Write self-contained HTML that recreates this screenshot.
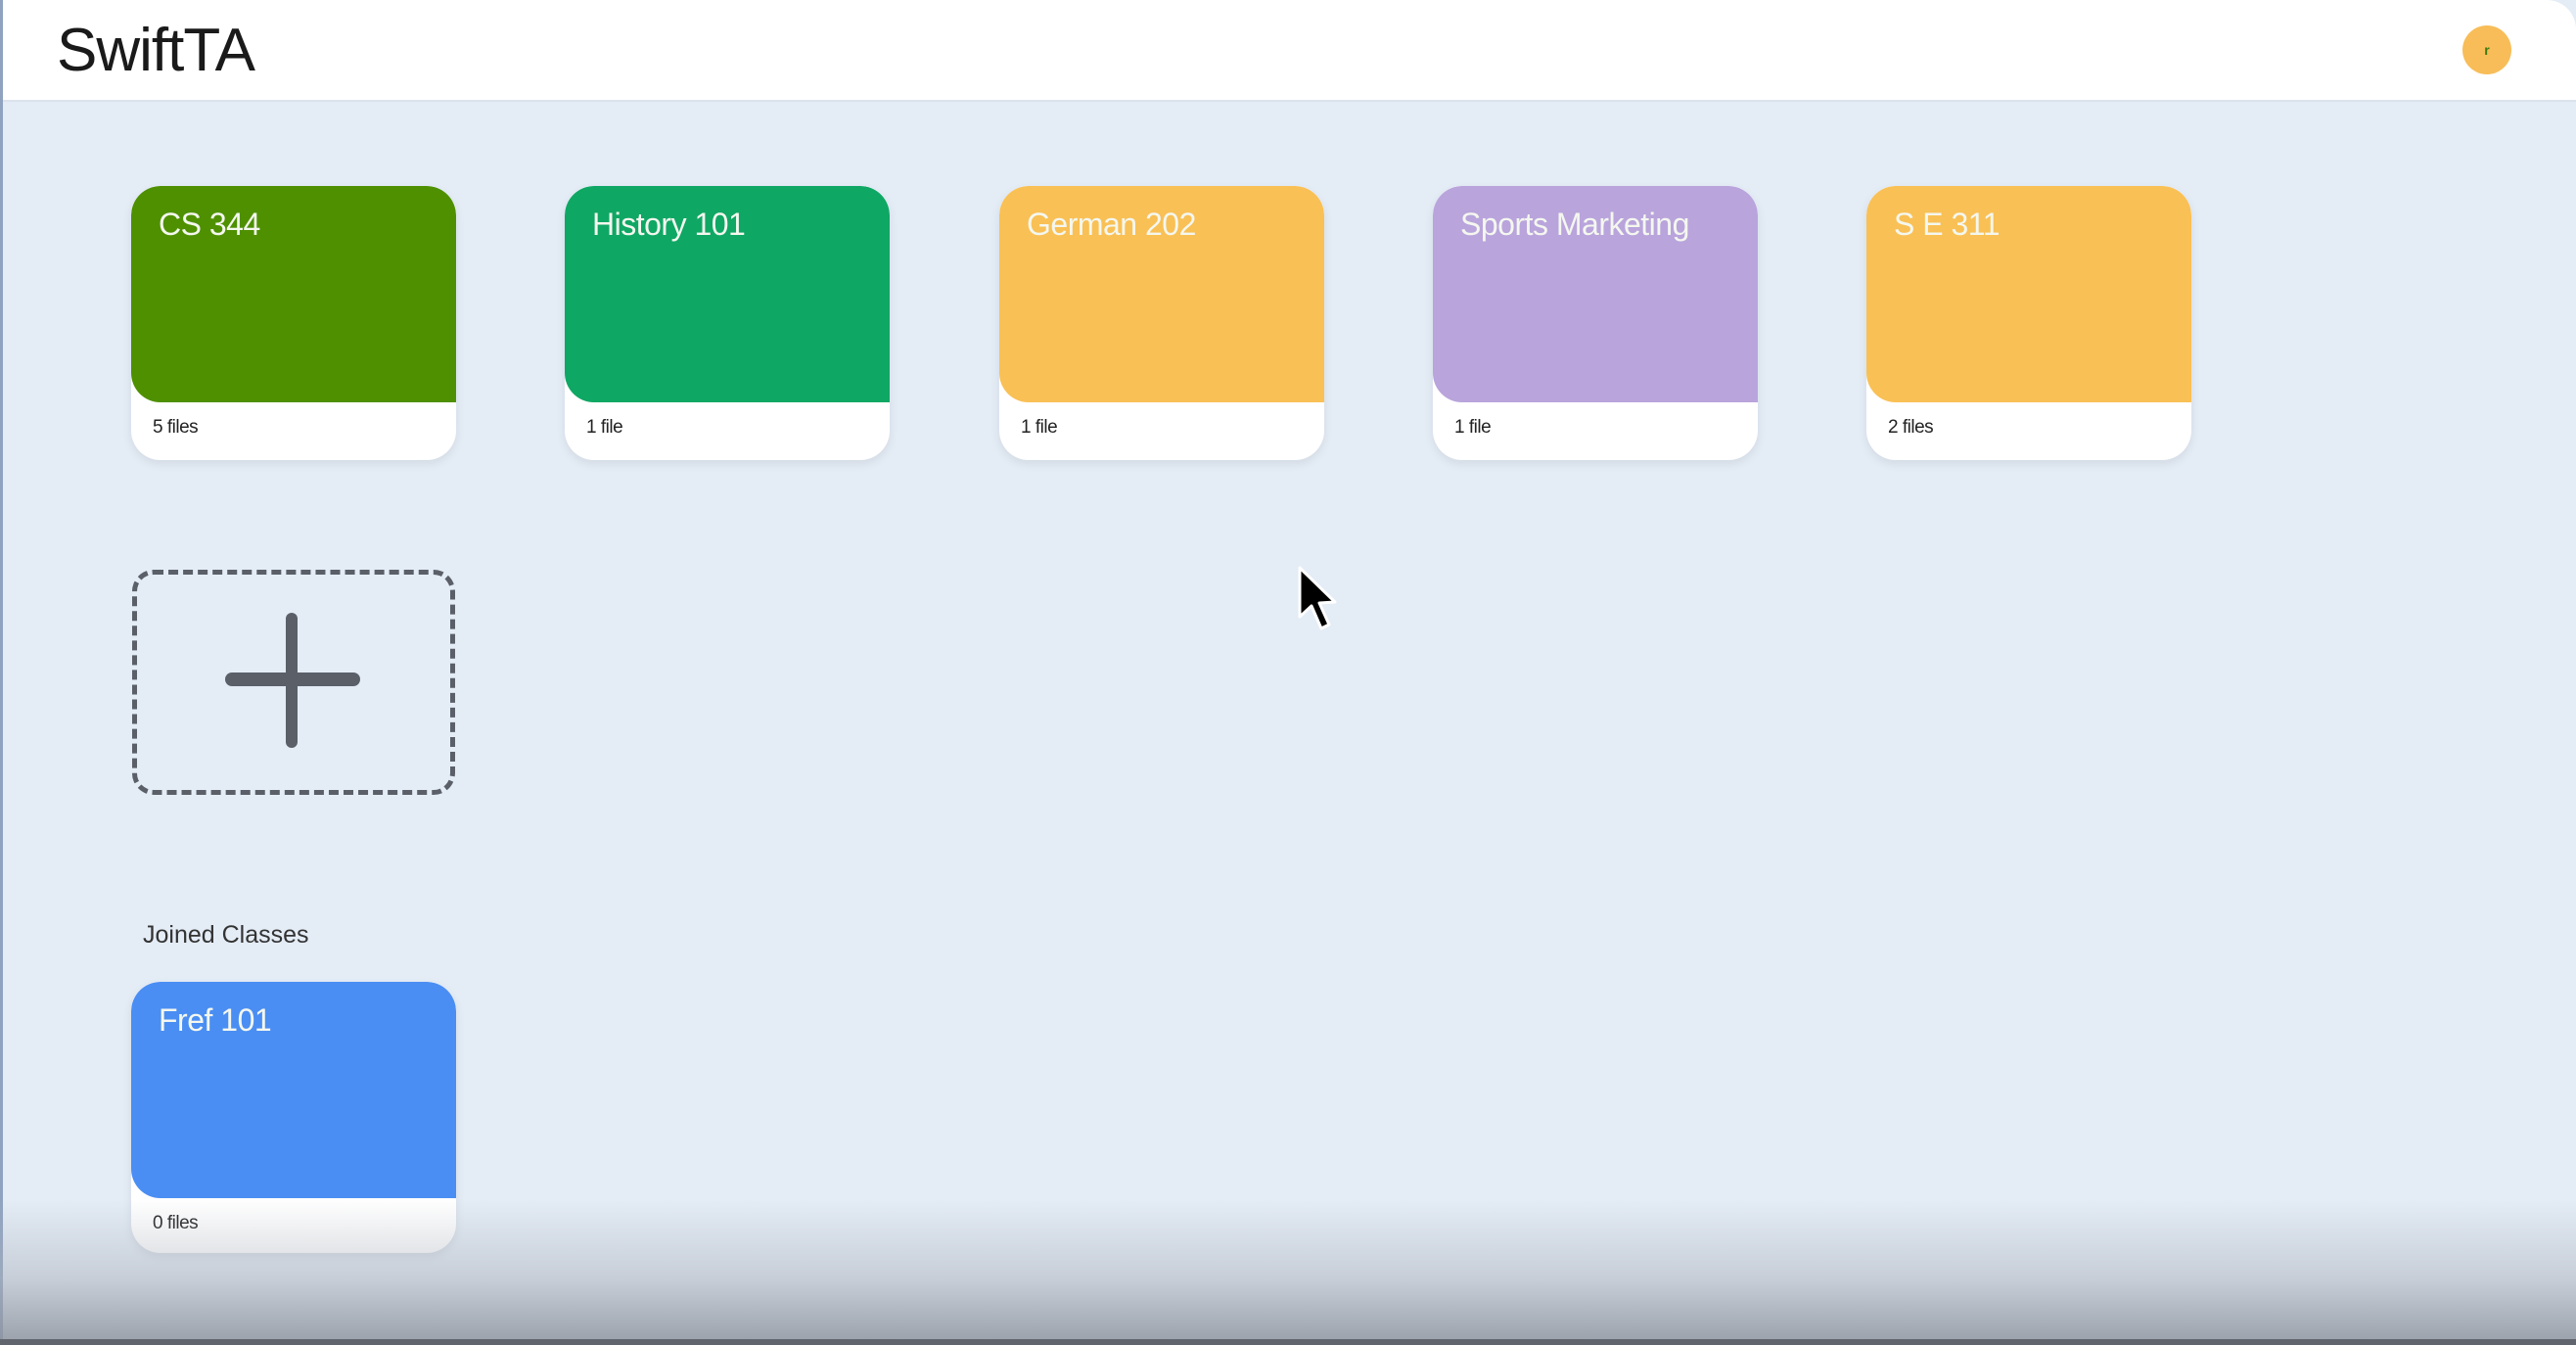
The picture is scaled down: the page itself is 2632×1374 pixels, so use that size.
<!DOCTYPE html>
<html><head><meta charset="utf-8"><style>
*{margin:0;padding:0;box-sizing:border-box}
html,body{width:2632px;height:1374px;overflow:hidden}
body{background:#e4ecf6;font-family:"Liberation Sans",sans-serif;position:relative}
.hdr{position:absolute;left:3px;top:0;right:0;height:104px;background:#fff;border-bottom:2px solid #dde3ec;border-top-right-radius:30px}
.logo{position:absolute;left:55px;top:12px;font-size:62px;color:#1a1a1a;letter-spacing:-1px;line-height:80px}
.av{position:absolute;left:2513px;top:26px;width:50px;height:50px;border-radius:50%;background:#f8bd58;color:#3a7a10;font-size:14px;text-align:center;line-height:50px;font-weight:bold}
.card{position:absolute;width:332px;height:280px;background:#fff;border-radius:30px;box-shadow:0 4px 10px rgba(0,0,0,.08);overflow:hidden}
.card .top{height:221px;border-radius:30px 30px 0 30px;position:relative}
.card .t{position:absolute;left:28px;top:21px;font-size:32px;color:#f4f7ef;letter-spacing:-0.5px}
.card .f{position:absolute;left:22px;top:236px;font-size:19px;color:#222;letter-spacing:-0.5px}
.add{position:absolute;left:135px;top:582px;width:330px;height:230px;border:5px dashed #5a5f68;border-radius:22px}
.jc{position:absolute;left:146px;top:941px;font-size:25px;color:#333}
.fade{position:absolute;left:0;right:0;top:1225px;height:149px;background:linear-gradient(to bottom,rgba(200,205,212,0) 0%,rgba(170,176,186,.5) 55%,rgba(140,146,156,.85) 100%)}
.lb{position:absolute;left:0;top:0;width:3px;height:1374px;background:#8fa3c0}
.bb{position:absolute;left:0;right:0;bottom:0;height:6px;background:#60656e}
</style></head><body>
<div class="hdr"><div class="logo">SwiftTA</div><div class="av">r</div></div>
<div class="lb"></div>

<div class="card" style="left:134px;top:190px"><div class="top" style="background:#4e9000"><div class="t">CS 344</div></div><div class="f">5 files</div></div>
<div class="card" style="left:577px;top:190px"><div class="top" style="background:#0fa764"><div class="t">History 101</div></div><div class="f">1 file</div></div>
<div class="card" style="left:1021px;top:190px"><div class="top" style="background:#f9c055"><div class="t">German 202</div></div><div class="f">1 file</div></div>
<div class="card" style="left:1464px;top:190px"><div class="top" style="background:#b9a4dc"><div class="t">Sports Marketing</div></div><div class="f">1 file</div></div>
<div class="card" style="left:1907px;top:190px"><div class="top" style="background:#f9c055"><div class="t">S E 311</div></div><div class="f">2 files</div></div>

<div class="add"></div>
<svg style="position:absolute;left:0;top:0" width="2632" height="1374">
<line x1="298" y1="632" x2="298" y2="758" stroke="#5a5f68" stroke-width="12" stroke-linecap="round"/>
<line x1="237" y1="694" x2="361" y2="694" stroke="#5a5f68" stroke-width="14" stroke-linecap="round"/>
<path d="M1328 580 L1328 630 L1340 619 L1350 642 L1358 638 L1348 616 L1364 615 Z" fill="#000" stroke="#fff" stroke-width="3" stroke-linejoin="round"/>
</svg>

<div class="jc">Joined Classes</div>
<div class="card" style="left:134px;top:1003px;height:277px"><div class="top" style="background:#4a8ef3"><div class="t">Fref 101</div></div><div class="f">0 files</div></div>

<div class="fade"></div>
<div class="bb"></div>
</body></html>
